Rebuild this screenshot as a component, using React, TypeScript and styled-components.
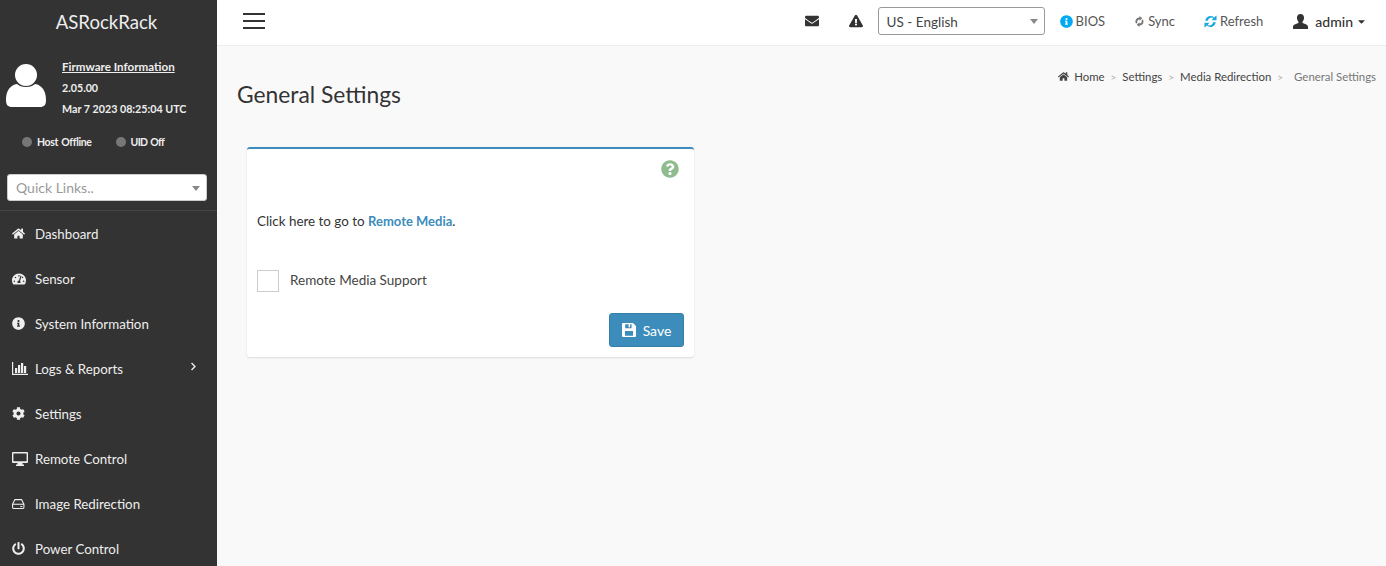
import React from 'react';
import styled, { createGlobalStyle } from 'styled-components';
import {
  FaHome, FaTachometerAlt, FaInfoCircle, FaCog, FaPowerOff,
  FaChevronRight, FaEnvelope, FaExclamationTriangle, FaQuestionCircle,
  FaCaretDown,
} from 'react-icons/fa';

const Global = createGlobalStyle`
  html, body {
    margin: 0;
    height: 100%;
    overflow: hidden;
  }
  body {
    font-family: Lato, "Noto Sans", sans-serif;
    font-size: 14px;
    color: #333;
    background: #f9f9f9;
  }
`;

const Page = styled.div`
  display: flex;
  width: 1386px;
  height: 566px;
  overflow: hidden;
`;

const Sidebar = styled.aside`
  width: 217px;
  flex: none;
  background: #333333;
  color: #eee;
`;

const Brand = styled.div`
  height: 45px;
  line-height: 44px;
  padding-right: 4px;
  text-align: center;
  font-size: 18.6px;
  color: #eee;
`;

const Profile = styled.div`
  display: flex;
  height: 73px;
  padding: 14px 0 0 6px;
  gap: 16px;
`;

const Avatar = styled.svg`
  width: 40px;
  height: 44px;
  margin-top: 5px;
  fill: #fff;
`;

const FirmwareInfo = styled.div`
  display: flex;
  flex-direction: column;
  gap: 5px;
  font-size: 10.7px;
  font-weight: 700;
  line-height: 16px;
  color: #eee;
`;

const FirmwareLink = styled.a`
  text-decoration: underline;
  font-size: 11.6px;
`;

const StatusRow = styled.div`
  display: flex;
  height: 20px;
  padding: 0 0 0 22px;
  gap: 24px;
  align-items: center;
`;

const Status = styled.span<{ $spacing: number }>`
  display: flex;
  align-items: center;
  gap: 5px;
  font-size: 10.5px;
  font-weight: 700;
  letter-spacing: ${(p) => p.$spacing}px;
  word-spacing: 1px;
`;

const Dot = styled.i`
  width: 10px;
  height: 10px;
  border-radius: 50%;
  background: #777;
`;

const QuickWrap = styled.div`
  padding: 22px 10px 9px 7px;
  border-bottom: 1px solid #444;
`;

const QuickLinks = styled.div`
  position: relative;
  height: 25px;
  line-height: 25px;
  background: #fff;
  border-radius: 3px;
  border: 1px solid #ccc;
  padding-left: 8px;
  font-size: 14px;
  color: #999;
`;

const Arrow = styled.span<{ $color: string }>`
  position: absolute;
  right: 6px;
  top: 50%;
  margin-top: -2px;
  border-left: 4px solid transparent;
  border-right: 4px solid transparent;
  border-top: 5px solid ${(p) => p.$color};
`;

const Menu = styled.nav`
  display: flex;
  flex-direction: column;
`;

const MenuItem = styled.a`
  display: flex;
  align-items: center;
  height: 45px;
  flex: none;
  font-size: 13.3px;
  color: #eee;
  position: relative;
`;

const MenuIcon = styled.span<{ $h: number }>`
  display: flex;
  align-items: center;
  justify-content: flex-start;
  width: 23px;
  margin-left: 12px;
  flex: none;
  svg {
    height: ${(p) => p.$h}px;
    width: auto;
  }
`;

const MenuArrow = styled(FaChevronRight)`
  position: absolute;
  left: 190px;
  top: 16px;
  width: 7px;
  height: 9px;
`;

const Main = styled.div`
  flex: 1;
  min-width: 0;
  display: flex;
  flex-direction: column;
`;

const TopBar = styled.header`
  display: flex;
  align-items: center;
  height: 46px;
  flex: none;
  background: #fff;
  border-bottom: 1px solid #eee;
  box-sizing: border-box;
  padding: 0 19px 3px 26px;
`;

const Burger = styled.div`
  display: flex;
  flex-direction: column;
  gap: 5px;
  width: 22px;
  margin-right: auto;
  i {
    display: block;
    height: 2px;
    background: #333;
  }
`;

const TopIcon = styled.span<{ $gap: number }>`
  display: flex;
  margin-right: ${(p) => p.$gap}px;
  color: #333;
  svg {
    width: 14px;
    height: 14px;
  }
`;

const LangSelect = styled.div`
  position: relative;
  width: 157px;
  height: 26px;
  line-height: 28px;
  border: 1px solid #999;
  border-radius: 3px;
  padding-left: 8px;
  font-size: 13.5px;
  color: #444;
  margin-right: 15px;
`;

const TopLink = styled.span<{ $gap: number }>`
  display: flex;
  align-items: center;
  gap: 3px;
  margin-right: ${(p) => p.$gap}px;
  font-size: 13px;
  color: #555;
`;

const UserBlock = styled.span`
  display: flex;
  align-items: center;
  font-size: 14px;
  font-weight: 500;
  color: #333;
`;

const UserGlyph = styled.svg`
  width: 15px;
  height: 15px;
  margin-right: 7px;
  fill: #333;
`;

const UserCaret = styled(FaCaretDown)`
  width: 11px;
  height: 11px;
  margin-left: 3px;
`;

const Content = styled.main`
  flex: 1;
  position: relative;
  padding: 0 10px 0 20px;
`;

const Crumbs = styled.div`
  position: absolute;
  top: 24px;
  right: 10px;
  display: flex;
  align-items: center;
  font-size: 11.4px;
  color: #444;
`;

const CrumbHome = styled(FaHome)`
  width: 11px;
  height: 11px;
  margin-right: 5px;
`;

const CrumbSep = styled.span<{ $wide?: boolean }>`
  margin: ${(p) => (p.$wide ? '0 11px 0 6px' : '0 6px')};
  color: #aaa;
  font-size: 10px;
`;

const CrumbLast = styled.span`
  color: #777;
`;

const Title = styled.h1`
  margin: 0;
  padding-top: 34px;
  font-size: 22.8px;
  font-weight: 400;
  line-height: 28px;
  color: #333;
`;

const Card = styled.section`
  width: 447px;
  height: 210px;
  box-sizing: border-box;
  margin: 39px 0 0 10px;
  padding: 0 10px;
  background: #fff;
  border-top: 2px solid #3c8dbc;
  border-radius: 3px;
  box-shadow: 0 1px 2px rgba(0, 0, 0, 0.12);
  display: flex;
  flex-direction: column;
`;

const HelpRow = styled.div`
  display: flex;
  justify-content: flex-end;
  padding: 11px 5px 0 0;
  color: #8fbc8f;
  svg {
    width: 18px;
    height: 18px;
  }
`;

const Lead = styled.p`
  margin: 0;
  padding-top: 34px;
  font-size: 13.4px;
  line-height: 18px;
  color: #333;
  a {
    color: #3c8dbc;
    font-weight: 700;
    font-size: 13px;
  }
`;

const CheckRow = styled.label`
  display: flex;
  align-items: center;
  gap: 11px;
  margin-top: 40px;
  font-size: 13.5px;
  color: #444;
`;

const CheckBox = styled.span`
  width: 20px;
  height: 20px;
  border: 1px solid #ccc;
`;

const CheckText = styled.span`
  margin-bottom: 2px;
`;

const SaveRow = styled.div`
  display: flex;
  justify-content: flex-end;
  margin-top: 21px;
`;

const SaveButton = styled.button`
  display: flex;
  align-items: center;
  justify-content: center;
  gap: 7px;
  width: 75px;
  height: 34px;
  background: #3c8dbc;
  border: 1px solid #367fa9;
  border-radius: 3px;
  color: #fff;
  font-family: inherit;
  font-size: 14px;
  svg {
    width: 14px;
    height: 14px;
    fill: #fff;
  }
`;

const ChartIcon = () => (
  <svg viewBox="0 0 16 13" fill="currentColor">
    <path d="M0 0h1.2v11.8H16V13H0z" />
    <rect x="3" y="6" width="2.2" height="5" />
    <rect x="6" y="3" width="2.2" height="8" />
    <rect x="9" y="1" width="2.2" height="10" />
    <rect x="12" y="4" width="2.2" height="7" />
  </svg>
);

const DesktopIcon = () => (
  <svg viewBox="0 0 16 14" fill="currentColor">
    <path fillRule="evenodd" d="M1 0h14a1 1 0 0 1 1 1v9a1 1 0 0 1-1 1h-4.5v1.4H12V14H4v-1.6h1.5V11H1a1 1 0 0 1-1-1V1a1 1 0 0 1 1-1zm.4 1.4v7.8h13.2V1.4z" />
  </svg>
);

const HddIcon = () => (
  <svg viewBox="0 0 15 12" fill="none" stroke="currentColor" strokeWidth="1.3">
    <path d="M3.5.7h8l2.8 5.6v4a1 1 0 0 1-1 1H1.7a1 1 0 0 1-1-1v-4z" />
    <path d="M.7 6.3h13.6" />
    <path d="M10 9h2.5" />
  </svg>
);

const RefreshIcon = () => (
  <svg viewBox="0 0 14 14" width="13" height="13" fill="#1fa8e0">
    <path d="M1.2 6.2A5.9 5.9 0 0 1 11 2.6L12.8.8a.4.4 0 0 1 .7.3v4.6h-4.6a.4.4 0 0 1-.3-.7l1.5-1.5a3.8 3.8 0 0 0-5.9 2.7z" />
    <path d="M12.8 7.8A5.9 5.9 0 0 1 3 11.4l-1.8 1.8a.4.4 0 0 1-.7-.3V8.3h4.6a.4.4 0 0 1 .3.7L3.9 10.5a3.8 3.8 0 0 0 5.9-2.7z" />
  </svg>
);

const SyncIcon = () => (
  <svg viewBox="0 0 14 14" width="11" height="11" fill="#777">
    <path d="M7 0l3.5 3L7 6V4.3A2.8 2.8 0 0 0 4.4 8.3L2.8 9.9A5 5 0 0 1 7 1.9z" />
    <path d="M7 14l-3.5-3L7 8v1.7a2.8 2.8 0 0 0 2.6-4l1.6-1.6A5 5 0 0 1 7 12.1z" />
  </svg>
);

const SaveIcon = () => (
  <svg viewBox="0 0 14 14">
    <path fillRule="evenodd" d="M1 0h10l3 3v10a1 1 0 0 1-1 1H1a1 1 0 0 1-1-1V1a1 1 0 0 1 1-1zm2.2 1.3v4h6.4v-4h-1.5v3H6.6v-3zM3 8v4.7h8V8z" />
  </svg>
);

const items = [
  { label: 'Dashboard', icon: <FaHome />, h: 13 },
  { label: 'Sensor', icon: <FaTachometerAlt />, h: 14 },
  { label: 'System Information', icon: <FaInfoCircle />, h: 13 },
  { label: 'Logs & Reports', icon: <ChartIcon />, h: 13, more: true },
  { label: 'Settings', icon: <FaCog />, h: 13 },
  { label: 'Remote Control', icon: <DesktopIcon />, h: 14 },
  { label: 'Image Redirection', icon: <HddIcon />, h: 10 },
  { label: 'Power Control', icon: <FaPowerOff />, h: 13 },
];

export default function App() {
  return (
    <Page>
      <Global />
      <Sidebar>
        <Brand>ASRockRack</Brand>
        <Profile>
          <Avatar viewBox="0 0 40 44">
            <circle cx="20" cy="11" r="11" />
            <path d="M0 36c0-9 4-15 11-16 2 2 5 3 9 3s7-1 9-3c7 1 11 7 11 16 0 5-2 7-6 7H6c-4 0-6-2-6-7z" />
          </Avatar>
          <FirmwareInfo>
            <FirmwareLink>Firmware Information</FirmwareLink>
            <span>2.05.00</span>
            <span>Mar 7 2023 08:25:04 UTC</span>
          </FirmwareInfo>
        </Profile>
        <StatusRow>
          <Status $spacing={-0.35}><Dot />Host Offline</Status>
          <Status $spacing={-0.7}><Dot />UID Off</Status>
        </StatusRow>
        <QuickWrap>
          <QuickLinks>
            Quick Links..
            <Arrow $color="#888" />
          </QuickLinks>
        </QuickWrap>
        <Menu>
          {items.map(({ label, icon, h, more }) => (
            <MenuItem key={label}>
              <MenuIcon $h={h}>{icon}</MenuIcon>
              {label}
              {more && <MenuArrow />}
            </MenuItem>
          ))}
        </Menu>
      </Sidebar>
      <Main>
        <TopBar>
          <Burger><i /><i /><i /></Burger>
          <TopIcon $gap={30}><FaEnvelope /></TopIcon>
          <TopIcon $gap={15}><FaExclamationTriangle /></TopIcon>
          <LangSelect>
            US - English
            <Arrow $color="#888" />
          </LangSelect>
          <TopLink $gap={29}><FaInfoCircle color="#00a9f4" size={13} />BIOS</TopLink>
          <TopLink $gap={29}><SyncIcon />Sync</TopLink>
          <TopLink $gap={30}><RefreshIcon />Refresh</TopLink>
          <UserBlock>
            <UserGlyph viewBox="0 0 14 14">
              <path d="M7 0c2 0 3.3 1.5 3.3 3.6 0 1.5-.7 2.9-1.4 3.6v1.3c1.5.7 5.1 1.3 5.1 3.7v1.8H0v-1.8c0-2.4 3.6-3 5.1-3.7V7.2C4.4 6.5 3.7 5.1 3.7 3.6 3.7 1.5 5 0 7 0z" />
            </UserGlyph>
            admin
            <UserCaret />
          </UserBlock>
        </TopBar>
        <Content>
          <Crumbs>
            <CrumbHome />Home
            <CrumbSep>&gt;</CrumbSep>Settings
            <CrumbSep>&gt;</CrumbSep>Media Redirection
            <CrumbSep $wide>&gt;</CrumbSep><CrumbLast>General Settings</CrumbLast>
          </Crumbs>
          <Title>General Settings</Title>
          <Card>
            <HelpRow><FaQuestionCircle /></HelpRow>
            <Lead>Click here to go to <a>Remote Media</a>.</Lead>
            <CheckRow><CheckBox /><CheckText>Remote Media Support</CheckText></CheckRow>
            <SaveRow>
              <SaveButton><SaveIcon />Save</SaveButton>
            </SaveRow>
          </Card>
        </Content>
      </Main>
    </Page>
  );
}
